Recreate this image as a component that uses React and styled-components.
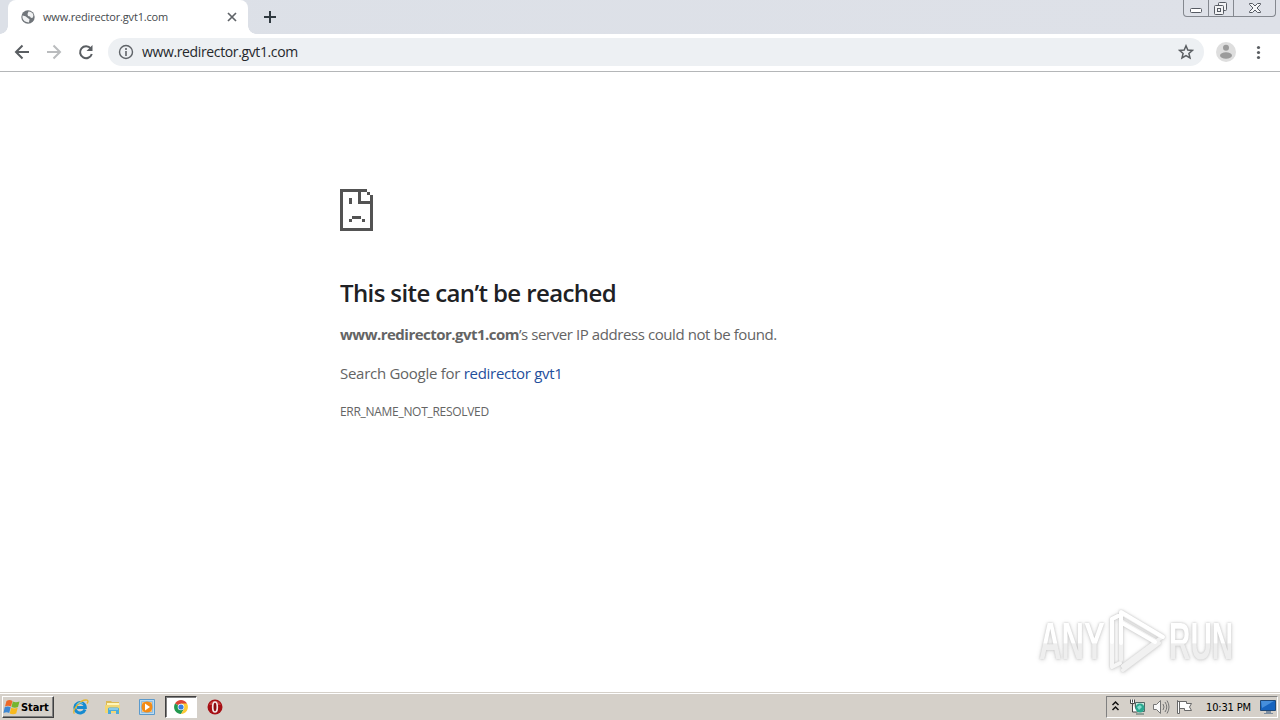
import React from 'react'
import styled, { createGlobalStyle } from 'styled-components'

const GlobalStyle = createGlobalStyle`
  * {
    box-sizing: border-box;
  }
  body {
    margin: 0;
    overflow: hidden;
    background: #fff;
    font-family: "Open Sans", "Noto Sans", sans-serif;
  }
  svg {
    display: block;
    flex: none;
  }
`

const Screen = styled.div`
  width: 1280px;
  height: 720px;
  display: flex;
  flex-direction: column;
  overflow: hidden;
`

const TabStrip = styled.div`
  height: 34px;
  flex: none;
  display: flex;
  background: linear-gradient(90deg, #dce0e7, #dee1e8);
`
const TabCorner = styled.div`
  width: 8px;
  height: 34px;
  background: radial-gradient(circle at ${props => (props.$right ? '100%' : '0')} 0, transparent 7.5px, #fff 8px) 0 26px / 8px 8px no-repeat;
`
const Tab = styled.div`
  width: 240px;
  height: 34px;
  padding: 0 10px 0 13px;
  display: flex;
  align-items: center;
  background: #fff;
  border-radius: 8px 8px 0 0;
`
const TabTitle = styled.div`
  flex: 1;
  margin-left: 8px;
  font-size: 11px;
  line-height: 34px;
  letter-spacing: -0.18px;
  white-space: nowrap;
  color: #45494d;
`
const NewTab = styled.div`
  width: 28px;
  height: 34px;
  display: flex;
  align-items: center;
  justify-content: center;
`
const WindowButtons = styled.div`
  width: 93px;
  height: 17px;
  margin: 0 4px 0 auto;
  display: flex;
  border: 1px solid #84888f;
  border-top: none;
  border-radius: 0 0 4px 4px;
`
const WindowButton = styled.div`
  width: ${props => props.$width}px;
  display: flex;
  align-items: center;
  justify-content: center;
  & + & {
    border-left: 1px solid #84888f;
  }
`

const Toolbar = styled.div`
  height: 38px;
  flex: none;
  display: flex;
  align-items: center;
  padding: 0 14px 1px;
  background: #fff;
  border-bottom: 1px solid #b4b6b8;
`
const NavButton = styled.div`
  width: 16px;
  margin-right: 16px;
`
const AddressBar = styled.div`
  width: 1096px;
  height: 28px;
  margin-left: -2px;
  padding: 0 10px;
  display: flex;
  align-items: center;
  border-radius: 14px;
  background: #edf0f3;
`
const Url = styled.div`
  flex: 1;
  margin-left: 8px;
  font-size: 14px;
  line-height: 28px;
  letter-spacing: -0.37px;
  white-space: nowrap;
  color: #25282c;
`
const Avatar = styled.div`
  margin: 0 14px 0 12px;
`

const Page = styled.main`
  flex: 1;
  display: flex;
  justify-content: space-between;
  padding: 117px 38px 0 340px;
  background: #fff;
`
const ErrorBox = styled.div`
  width: 600px;
  color: #646464;
  white-space: nowrap;
`
const Title = styled.h1`
  margin: 44px 0 0;
  font-size: 24px;
  font-weight: 600;
  line-height: 36px;
  letter-spacing: -0.61px;
  color: #202124;
`
const Message = styled.p`
  margin: ${props => props.$top}px 0 0;
  font-size: 15px;
  line-height: 22px;
  letter-spacing: ${props => props.$spacing}px;
`
const Host = styled.strong`
  font-weight: 700;
  letter-spacing: -0.52px;
`
const Link = styled.a`
  color: #1f4f9c;
`
const ErrorCode = styled.div`
  margin-top: 19px;
  font-size: 12px;
  line-height: 18px;
  letter-spacing: -0.3px;
`
const Watermark = styled.div`
  align-self: flex-end;
  display: flex;
  align-items: center;
  width: 203px;
  height: 68px;
  margin-bottom: 17px;
  filter: drop-shadow(0 0 1px #c4c4c4) drop-shadow(0 1px 2px #e0e0e0);
`
const MarkText = styled.div`
  width: ${props => props.$width}px;
  height: 54px;
  flex: none;
  span {
    display: inline-block;
    font: bold 52px/54px "Liberation Sans", sans-serif;
    color: transparent;
    background: linear-gradient(#fff 54%, #eee 55%);
    background-clip: text;
    white-space: nowrap;
    transform: scaleX(${props => props.$scale});
    transform-origin: left;
  }
`

const Taskbar = styled.footer`
  height: 28px;
  flex: none;
  display: flex;
  align-items: center;
  padding: 1px 0 0 2px;
  background: #d5d0c9;
  border-top: 1px solid #d5d0c9;
  box-shadow: inset 0 1px #fff;
`
const StartButton = styled.div`
  width: 52px;
  height: 22px;
  margin-right: 18px;
  display: flex;
  align-items: center;
  border: 1px solid;
  border-color: #fff #404040 #404040 #fff;
  box-shadow: inset -1px -1px #808080;
  font: bold 11px "DejaVu Sans Condensed", "DejaVu Sans", sans-serif;
  letter-spacing: -0.1px;
  color: #000;
  span {
    margin-left: 1px;
  }
`
const TaskIcon = styled.div`
  width: ${props => props.$width || 34}px;
  height: 22px;
  display: flex;
  align-items: center;
  ${props => props.$active && `
    margin-left: -8px;
    margin-right: 10px;
    padding-left: 8px;
    padding-bottom: 1px;
    background: #fff;
    border: 1px solid;
    border-color: #404040 #fff #fff #404040;
    box-shadow: inset 1px 1px #808080;
  `}
`
const Tray = styled.div`
  width: 172px;
  height: 22px;
  margin: 0 2px 0 auto;
  padding: 0 0 0 4px;
  display: flex;
  align-items: center;
  border: 1px solid;
  border-color: #808080 #fff #fff #808080;
`
const TrayIcon = styled.div`
  width: ${props => props.$width}px;
`
const Clock = styled.div`
  width: 54px;
  font: 11px "DejaVu Sans Condensed", "DejaVu Sans", sans-serif;
  letter-spacing: -0.15px;
  white-space: nowrap;
  color: #000;
`

const Globe = () => (
  <svg width="14" height="14" viewBox="0 0 14 14">
    <circle cx="7" cy="7" r="6.7" fill="#70757a" />
    <path d="M7.5 1.5c2.5.1 4.3 1.4 4.900 3.600L12 7.500l-2 .5-1-1.500-2-.5-.5-2ZM1.500 5.500l3 .7 2.500 2 1.500 1-.5 3.300q-5.500-.5-6.500-4.500Z" fill="#f1f2f3" />
  </svg>
)

const WindowGlyphs = () => (
  <WindowButtons>
    <WindowButton $width={24}>
      <svg width="13" height="17" fill="#fff" stroke="#565b63">
        <rect x=".5" y="8.5" width="11" height="4" rx="1" />
      </svg>
    </WindowButton>
    <WindowButton $width={25}>
      <svg width="14" height="17" fill="#f2f3f5" stroke="#565b63">
        <rect x="4.5" y="2.5" width="8" height="8" rx="1" />
        <rect x=".5" y="5.5" width="9" height="9" rx="1" />
        <rect x="3.5" y="8.5" width="3" height="3" />
      </svg>
    </WindowButton>
    <WindowButton $width={42}>
      <svg width="14" height="17" fill="#f5f6f8" stroke="#565b63">
        <path d="M1.5 3.5h3L7 6l2.5-2.5h3v1L9 8l3.500 3.500v1h-3L7 10l-2.500 2.500h-3v-1L5 8 1.500 4.500Z" />
      </svg>
    </WindowButton>
  </WindowButtons>
)

const SadFile = () => (
  <svg width="34" height="42" viewBox="0 0 34 42" fill="#535353" shapeRendering="crispEdges">
    <path d="M0 0h27v3H3v36h27V15H18V3h3v9h9V6h3v36H0ZM27 3h3v3h-3ZM9 9h3v6H9ZM12 27h9v3h-9ZM9 30h3v3H9ZM22 30h3v3h-3Z" />
  </svg>
)

const MarkLogo = () => (
  <svg width="62" height="66" viewBox="0 0 62 66" fill="none" strokeLinejoin="round" strokeLinecap="round">
    <path d="M5 59V11l6-3M5 59l8-4" stroke="#f6f6f6" strokeWidth="4" />
    <path d="M14 52V5l41 24-39 29M14 13l38 22-36 27" stroke="#f1f1f1" strokeWidth="4" />
    <path d="M5 34V11l6-3M14 35V4l42 25M15 15l33 19" stroke="#fff" strokeWidth="4" />
  </svg>
)

const WindowsFlag = () => (
  <svg width="17" height="16" viewBox="0 0 16 16">
    <path d="M3 2q3-2 6 0L7.500 7.500q-3-1.500-6 0Z" fill="#ed6929" />
    <path d="M9.300 2.500q3 1.500 6.700 0L14.500 8q-3 1.500-6.500 0Z" fill="#75b52e" />
    <path d="M1.200 8.200q3-1.500 6 0L5.700 14q-2.500-1.500-5.700 0Z" fill="#3e87d3" />
    <path d="M7.700 8.700q3 1.500 6.500 0l-1.500 5.800q-3 1.500-6.500 0Z" fill="#f8b91c" />
  </svg>
)

const Explorer = () => (
  <svg width="17" height="16" viewBox="0 0 17 16" fill="none">
    <path d="M13 10.500A5.200 5.200 0 1 1 13.300 8.500H5" stroke="#168bd0" strokeWidth="3" />
    <path d="M2.500 14.500C-1 12 9-.5 15.300 1.200c1.300.7.500 2.400-.4 3.300" stroke="#e4b62d" strokeWidth="1.300" />
    <path d="M4.700 5.500a4 4 0 0 1 6-.8" stroke="#7bd1f3" />
  </svg>
)

const Folder = () => (
  <svg width="16" height="16" viewBox="0 0 16 16">
    <path d="M1 2h5l1 1h7v10H1Z" fill="#dcb955" />
    <path d="M2 4h12v3H2Z" fill="#fff6b9" />
    <path d="M0 6h15v8H0Z" fill="#f2d775" />
    <path d="M3 15V10q0-1.500 1.500-1.500h8Q14 8.500 14 10v5h-3v-3H6v3Z" fill="#4aaada" />
    <path d="M4 10h9" stroke="#c2eafa" />
  </svg>
)

const Player = () => (
  <svg width="16" height="16" viewBox="0 0 16 16">
    <path d="M.5.500h15v15H.500Z" fill="#b9dbf2" stroke="#5b9acc" />
    <path d="M2.500 2.500h11v11h-11Z" fill="#f9c078" stroke="#8fbce0" />
    <circle cx="8" cy="8" r="5.500" fill="#f28b16" />
    <path d="m6 4.500 5 3.500-5 3.500Z" fill="#fff" />
  </svg>
)

const Chrome = () => (
  <svg width="14" height="14" viewBox="0 0 14 14">
    <path d="M7 7 1 3.500a7 7 0 0 1 12 0Z" fill="#dc4535" />
    <path d="M7 7 1 3.500a7 7 0 0 0 6 10.500l3-5Z" fill="#23994f" />
    <path d="M7 7V3.500h6A7 7 0 0 1 7 14l3-5Z" fill="#fcc934" />
    <circle cx="7" cy="7" r="3.300" fill="#fff" />
    <circle cx="7" cy="7" r="2.600" fill="#387de0" />
  </svg>
)

const Opera = () => (
  <svg width="16" height="16" viewBox="0 0 16 16">
    <circle cx="8" cy="8" r="7.500" fill="#a60f14" />
    <path d="M2 6a6.500 6.500 0 0 1 12 0Z" fill="#c83c3c" />
    <ellipse cx="8" cy="8" rx="2.300" ry="5" fill="#8c0b10" stroke="#f2e8e8" strokeWidth="1.700" />
  </svg>
)

const Network = () => (
  <svg width="17" height="16" viewBox="0 0 17 16">
    <path d="M6.500 3.500h9v9h-9Z" fill="#cbe9df" stroke="#516766" />
    <path d="M1.500.500v4h4v-4M3.500.500v3M3.500 5v8h5" fill="#fff" stroke="#454545" />
    <path d="M7 15h8" stroke="#4c6d67" />
    <circle cx="11" cy="9" r="4.500" fill="#2ba890" />
    <path d="m8 8 3-2 2 2-3 3Z" fill="#84ddd0" />
  </svg>
)

const Speaker = () => (
  <svg width="17" height="16" viewBox="0 0 17 16" fill="none" stroke="#757575">
    <path d="M.5 5.500h3l4-4v13l-4-4h-3Z" fill="#f8f8f8" />
    <path d="M10 5q2 3 0 6M12 3q3.500 5 0 10M14 1.500q4 6.500 0 13" />
  </svg>
)

const Flag = () => (
  <svg width="16" height="16" viewBox="0 0 16 16" fill="#fff" stroke="#686868">
    <path d="M.5 1.500v13h2v-5h5v2h7l-2-3.500 2-3.500h-5v-2h-9ZM2.500 2v8" />
  </svg>
)

const Monitor = () => (
  <svg width="16" height="14" viewBox="0 0 16 14">
    <path d="M.5.500h15v10H.500Z" fill="#1764bf" stroke="#204978" />
    <path d="M1 1h13L2 8Z" fill="#468fdc" />
    <path d="M6 11h5v2h2v1H4v-1h2Z" fill="#7d8ea0" />
  </svg>
)

class App extends React.Component {
  render() {
    return (
      <Screen>
        <GlobalStyle />
        <TabStrip>
          <TabCorner />
          <Tab>
            <Globe />
            <TabTitle>www.redirector.gvt1.com</TabTitle>
            <svg width="12" height="12" stroke="#5f6368" strokeWidth="1.700">
              <path d="m2 2 8 8M10 2l-8 8" />
            </svg>
          </Tab>
          <TabCorner $right />
          <NewTab>
            <svg width="12" height="12" stroke="#303940" strokeWidth="2">
              <path d="M6 0v12M0 6h12" />
            </svg>
          </NewTab>
          <WindowGlyphs />
        </TabStrip>
        <Toolbar>
          <NavButton>
            <svg width="16" height="16" fill="none" stroke="#5a5e62" strokeWidth="2">
              <path d="M15 8H2M8.500 1.500 2 8l6.500 6.500" />
            </svg>
          </NavButton>
          <NavButton>
            <svg width="16" height="16" fill="none" stroke="#babcbe" strokeWidth="2">
              <path d="M1 8h13M7.500 1.500 14 8l-6.500 6.500" />
            </svg>
          </NavButton>
          <NavButton>
            <svg width="16" height="16" fill="none" stroke="#5a5e62" strokeWidth="2">
              <path d="M12.800 4.500A6 6 0 1 0 13.800 10" />
              <path d="M14.500 1v6h-6Z" fill="#5a5e62" stroke="none" />
            </svg>
          </NavButton>
          <AddressBar>
            <svg width="16" height="16" fill="none" stroke="#5f6368">
              <circle cx="8" cy="8" r="6.500" strokeWidth="1.400" />
              <path d="M8 7v5M8 4v2" strokeWidth="1.600" />
            </svg>
            <Url>www.redirector.gvt1.com</Url>
            <svg width="16" height="16" fill="none" stroke="#5a5e62" strokeWidth="1.500">
              <path d="m8 1.800 1.800 4.200 4.600.4-3.500 3 1.100 4.500L8 11.500l-4 2.400 1.100-4.500-3.500-3L6.200 6Z" />
            </svg>
          </AddressBar>
          <Avatar>
            <svg width="20" height="20">
              <circle cx="10" cy="10" r="10" fill="#dedede" />
              <circle cx="10" cy="5.800" r="3" fill="#9b9b9b" />
              <ellipse cx="10" cy="13.500" rx="6" ry="3.200" fill="#9b9b9b" />
            </svg>
          </Avatar>
          <svg width="16" height="16" fill="#5a5e62">
            <circle cx="8.500" cy="3.500" r="1.600" />
            <circle cx="8.500" cy="8.500" r="1.600" />
            <circle cx="8.500" cy="13.500" r="1.600" />
          </svg>
        </Toolbar>
        <Page>
          <ErrorBox>
            <SadFile />
            <Title>This site can’t be reached</Title>
            <Message $top={12} $spacing={-0.42}>
              <Host>www.redirector.gvt1.com</Host>’s server IP address could not be found.
            </Message>
            <Message $top={17} $spacing={-0.28}>
              Search Google for <Link>redirector gvt1</Link>
            </Message>
            <ErrorCode>ERR_NAME_NOT_RESOLVED</ErrorCode>
          </ErrorBox>
          <Watermark>
            <MarkText $width={68} $scale={0.6}><span>ANY</span></MarkText>
            <MarkLogo />
            <MarkText $width={66} $scale={0.57}><span>RUN</span></MarkText>
          </Watermark>
        </Page>
        <Taskbar>
          <StartButton>
            <WindowsFlag />
            <span>Start</span>
          </StartButton>
          <TaskIcon $width={33}><Explorer /></TaskIcon>
          <TaskIcon><Folder /></TaskIcon>
          <TaskIcon><Player /></TaskIcon>
          <TaskIcon $width={32} $active><Chrome /></TaskIcon>
          <TaskIcon><Opera /></TaskIcon>
          <Tray>
            <TrayIcon $width={18}>
              <svg width="9" height="14" fill="none" stroke="#111" strokeWidth="1.500">
                <path d="m1.500 5 3-3 3 3M1.500 10l3-3 3 3" />
              </svg>
            </TrayIcon>
            <TrayIcon $width={24}><Network /></TrayIcon>
            <TrayIcon $width={24}><Speaker /></TrayIcon>
            <TrayIcon $width={29}><Flag /></TrayIcon>
            <Clock>10:31 PM</Clock>
            <Monitor />
          </Tray>
        </Taskbar>
      </Screen>
    )
  }
}

export default App
